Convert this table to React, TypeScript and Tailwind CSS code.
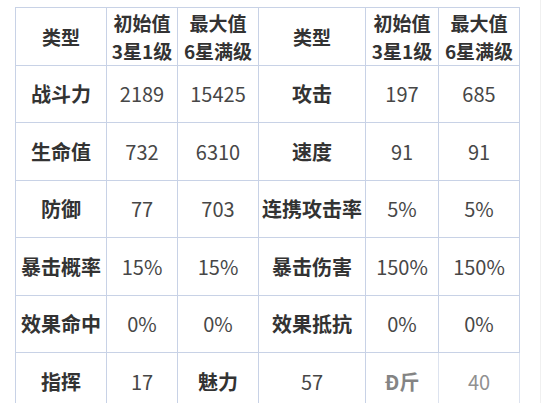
import React from "react";

const header = [
  ["类型"],
  ["初始值", "3星1级"],
  ["最大值", "6星满级"],
  ["类型"],
  ["初始值", "3星1级"],
  ["最大值", "6星满级"],
];

const rows: string[][] = [
  ["战斗力", "2189", "15425", "攻击", "197", "685"],
  ["生命值", "732", "6310", "速度", "91", "91"],
  ["防御", "77", "703", "连携攻击率", "5%", "5%"],
  ["暴击概率", "15%", "15%", "暴击伤害", "150%", "150%"],
  ["效果命中", "0%", "0%", "效果抵抗", "0%", "0%"],
  ["指挥", "17", "魅力", "57", "Ð斤", "40"],
];

const font = { fontFamily: '"Noto Sans CJK SC", "Noto Sans", sans-serif' };

export default function App() {
  return (
    <div className="w-[550px] h-[403px] bg-white overflow-hidden flex" style={font}>
      <div className="pl-[15px] pt-[7px]">
        <div className="grid grid-cols-[91px_71px_81px_107px_73px_81px] grid-rows-[58px_57px_58px_57px_58px_57px_58px] border-l border-t border-[#c8d2e6]">
          {header.map((h, i) => (
            <div
              key={"h" + i}
              className="border-r border-b border-[#c8d2e6] flex flex-col items-center justify-center text-[19px] leading-[28px] font-bold text-[#333]"
            >
              {h.map((t, j) => (
                <span key={j}>{t}</span>
              ))}
            </div>
          ))}
          {rows.map((r, ri) =>
            r.map((c, ci) => {
              const last = ri === 5;
              const isLabel = last
                ? ci === 0 || ci === 2 || ci === 4
                : ci === 0 || ci === 3;
              const faded = last && (ci === 4 || ci === 5);
              return (
                <div
                  key={ri + "-" + ci}
                  className={
                    "border-r border-b border-[#c8d2e6] flex items-center justify-center leading-none " +
                    (isLabel
                      ? "text-[20px] font-bold text-[#333] "
                      : "text-[20px] font-normal text-[#474747] ") +
                    (faded ? "opacity-60" : "")
                  }
                >
                  {c}
                </div>
              );
            })
          )}
        </div>
      </div>
      <div className="ml-[20px] h-full border-l border-[#f0f0f0]" />
    </div>
  );
}
